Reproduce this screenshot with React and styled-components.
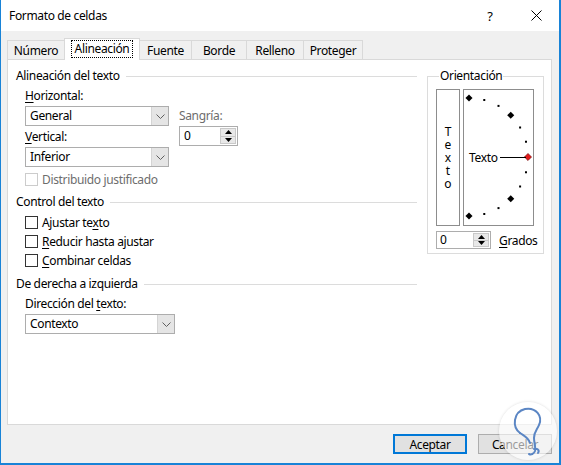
import React from 'react'
import styled, { createGlobalStyle } from 'styled-components'

const GlobalStyle = createGlobalStyle`
  html, body {
    margin: 0;
    padding: 0;
    background: #fff;
  }
  body {
    font-family: "Noto Sans", "Segoe UI", sans-serif;
    font-size: 12px;
    letter-spacing: -0.35px;
    color: #000;
  }
`

const Window = styled.div`
  position: relative;
  width: 561px;
  height: 465px;
  box-sizing: border-box;
  border-left: 1px solid #1883d7;
  border-right: 2px solid #1883d7;
  border-bottom: 2px solid #1883d7;
  background: #f0f0f0;
  display: flex;
  flex-direction: column;
  overflow: hidden;
`

const TitleBar = styled.div`
  height: 31px;
  flex: none;
  background: #fff;
  display: flex;
  align-items: center;
  padding-left: 8px;
`

const Title = styled.div`
  flex: 1;
`

const TitleButton = styled.div`
  width: 46px;
  height: 31px;
  display: flex;
  align-items: center;
  justify-content: center;
  font-size: 13px;
`

const Body = styled.div`
  flex: 1;
  display: flex;
  flex-direction: column;
  padding: 7px 7px 9px 6px;
`

const Tabs = styled.div`
  display: flex;
  align-items: flex-end;
  height: 21px;
`

const Tab = styled.div`
  position: relative;
  box-sizing: border-box;
  width: ${p => p.$w}px;
  height: ${p => (p.$active ? 22 : 19)}px;
  margin-right: -1px;
  margin-bottom: ${p => (p.$active ? -1 : 0)}px;
  z-index: ${p => (p.$active ? 2 : 1)};
  border: 1px solid #d9d9d9;
  border-bottom: none;
  background: ${p => (p.$active ? '#fff' : '#f0f0f0')};
  display: flex;
  justify-content: center;
  align-items: ${p => (p.$active ? 'flex-start' : 'center')};
  padding-top: ${p => (p.$active ? 2 : 0)}px;
`

const Focus = styled.span`
  outline: 1px dotted #000;
  padding: 0 3px;
  line-height: 16px;
`

const Panel = styled.div`
  height: 366px;
  box-sizing: border-box;
  background: #fff;
  border: 1px solid #d9d9d9;
  display: flex;
  padding: 8px 8px 0 8px;
`

const LeftCol = styled.div`
  width: 402px;
  display: flex;
  flex-direction: column;
`

const SectionHeader = styled.div`
  display: flex;
  align-items: center;
  height: 16px;
  line-height: 16px;
  margin-top: ${p => p.$mt || 0}px;
  &::after {
    content: '';
    flex: 1;
    height: 1px;
    margin-left: 6px;
    background: #dcdcdc;
  }
`

const Indent = styled.div`
  padding-left: 9px;
  margin-top: ${p => p.$mt || 0}px;
  display: ${p => (p.$row ? 'flex' : 'block')};
`

const Stack = styled.div`
  display: flex;
  flex-direction: column;
  padding-top: ${p => p.$pt || 0}px;
  margin-left: ${p => p.$ml || 0}px;
`

const Label = styled.div`
  height: 16px;
  line-height: 16px;
  white-space: nowrap;
  color: ${p => (p.$dim ? '#6d6d6d' : '#000')};
  margin-top: ${p => p.$mt || 0}px;
`

const Select = styled.div`
  box-sizing: border-box;
  width: ${p => p.$w}px;
  height: 20px;
  margin-top: 2px;
  border: 1px solid #adadad;
  background: #fff;
  display: flex;
`

const FieldValue = styled.div`
  flex: 1;
  padding-left: ${p => p.$pl || 4}px;
  line-height: ${p => p.$lh || 18}px;
`

const DropButton = styled.div`
  width: 16px;
  background: #e5e5e5;
  border-left: 1px solid #d4d4d4;
  display: flex;
  align-items: center;
  justify-content: center;
`

const Spinner = styled.div`
  box-sizing: border-box;
  width: ${p => p.$w}px;
  height: ${p => p.$h}px;
  margin-top: ${p => p.$mt || 0}px;
  border: 1px solid #adadad;
  background: #fff;
  display: flex;
`

const SpinButtons = styled.div`
  width: 14px;
  margin: 1px;
  display: flex;
  flex-direction: column;
  border: 1px solid #c9c9c9;
  background: #e8e8e8;
`

const SpinHalf = styled.div`
  flex: 1;
  display: flex;
  align-items: center;
  justify-content: center;
  & + & {
    border-top: 1px solid #c9c9c9;
  }
`

const CheckRow = styled.label`
  display: flex;
  align-items: center;
  height: ${p => p.$h || 19}px;
  gap: 4px;
  color: ${p => (p.$disabled ? '#6d6d6d' : '#000')};
`

const Box = styled.span`
  width: 13px;
  height: 13px;
  box-sizing: border-box;
  border: 1px solid ${p => (p.$disabled ? '#cccccc' : '#333333')};
  background: #fff;
`

const RightCol = styled.div`
  width: 116px;
  margin-left: 10px;
`

const Group = styled.fieldset`
  box-sizing: border-box;
  width: 116px;
  margin: 0;
  padding: 5px 6px 4px 8px;
  border: 1px solid #dcdcdc;
  legend {
    padding: 0 1px;
    margin-left: 3px;
    line-height: 16px;
  }
`

const DialRow = styled.div`
  display: flex;
  gap: 3px;
`

const VerticalText = styled.div`
  box-sizing: border-box;
  width: 24px;
  height: 137px;
  border: 1px solid #8d8d8d;
  display: flex;
  align-items: center;
  justify-content: center;
`

const Stacked = styled.span`
  width: 8px;
  text-align: center;
  line-height: 13px;
  letter-spacing: 0;
  word-break: break-all;
`

const Dial = styled.div`
  box-sizing: border-box;
  width: 71px;
  height: 137px;
  border: 1px solid #8d8d8d;
  svg {
    display: block;
  }
`

const DegreeRow = styled.div`
  display: flex;
  align-items: center;
  margin-top: 5px;
  gap: 8px;
`

const Footer = styled.div`
  display: flex;
  justify-content: flex-end;
  gap: 11px;
  margin-top: 9px;
`

const Button = styled.div`
  box-sizing: border-box;
  width: 74px;
  height: 20px;
  background: #e1e1e1;
  border: ${p => (p.$primary ? '2px solid #0078d7' : '1px solid #adadad')};
  display: flex;
  align-items: center;
  justify-content: center;
`

const Watermark = styled.div`
  position: absolute;
  left: 498px;
  top: 402px;
  width: 58px;
  height: 58px;
  border-radius: 50%;
  background: rgba(255, 255, 255, 0.6);
  box-shadow: 0 0 3px rgba(0, 0, 0, 0.15);
  svg {
    display: block;
  }
`

const U = styled.span`
  text-decoration: underline;
  text-underline-offset: 2px;
`

const Chevron = () => (
  <svg width="9" height="5" viewBox="0 0 9 5">
    <path d="M0.5 0.5 L4.5 4.5 L8.5 0.5" fill="none" stroke="#606060" strokeWidth="1" />
  </svg>
)

const Arrow = ({ up }) => (
  <svg width="7" height="4" viewBox="0 0 7 4">
    <path d={up ? 'M0 4 L3.5 0 L7 4 Z' : 'M0 0 L7 0 L3.5 4 Z'} fill="#000" />
  </svg>
)

const SpinBox = ({ w, h, mt, pl }) => (
  <Spinner $w={w} $h={h} $mt={mt}>
    <FieldValue $pl={pl} $lh={h - 2}>0</FieldValue>
    <SpinButtons>
      <SpinHalf><Arrow up /></SpinHalf>
      <SpinHalf><Arrow /></SpinHalf>
    </SpinButtons>
  </Spinner>
)

const Combo = ({ w, value }) => (
  <Select $w={w}>
    <FieldValue>{value}</FieldValue>
    <DropButton><Chevron /></DropButton>
  </Select>
)

const dialPoints = () => {
  const cx = 5
  const cy = 67
  const r = 59
  const items = []
  for (let a = 90; a >= -90; a -= 15) {
    const rad = (a * Math.PI) / 180
    const x = cx + r * Math.cos(rad)
    const y = cy - r * Math.sin(rad)
    if (a === 0) {
      items.push(<rect key={a} x={x - 2.5} y={y - 2.5} width="5" height="5" fill="#e31b1b" stroke="#600" strokeWidth="0.6" transform={`rotate(45 ${x} ${y})`} />)
    } else if (a % 45 === 0) {
      items.push(<rect key={a} x={x - 2.5} y={y - 2.5} width="5" height="5" fill="#000" transform={`rotate(45 ${x} ${y})`} />)
    } else {
      items.push(<rect key={a} x={x - 1} y={y - 1} width="2" height="2" fill="#000" />)
    }
  }
  return items
}

export default function App() {
  return (
    <>
      <GlobalStyle />
      <Window>
        <TitleBar>
          <Title>Formato de celdas</Title>
          <TitleButton>?</TitleButton>
          <TitleButton>
            <svg width="11" height="11" viewBox="0 0 11 11">
              <path d="M0.5 0.5 L10.5 10.5 M10.5 0.5 L0.5 10.5" stroke="#000" strokeWidth="1" />
            </svg>
          </TitleButton>
        </TitleBar>
        <Body>
          <Tabs>
            <Tab $w={58}>Número</Tab>
            <Tab $w={76} $active><Focus>Alineación</Focus></Tab>
            <Tab $w={53}>Fuente</Tab>
            <Tab $w={56}>Borde</Tab>
            <Tab $w={58}>Relleno</Tab>
            <Tab $w={60}>Proteger</Tab>
          </Tabs>
          <Panel>
            <LeftCol>
              <SectionHeader>Alineación del texto</SectionHeader>
              <Indent $row $mt={4}>
                <Stack>
                  <Label><U>H</U>orizontal:</Label>
                  <Combo w={144} value="General" />
                  <Label $mt={3}><U>V</U>ertical:</Label>
                  <Combo w={144} value="Inferior" />
                </Stack>
                <Stack $pt={20} $ml={10}>
                  <Label $dim>Sangría:</Label>
                  <SpinBox w={59} h={20} mt={2} pl={4} />
                </Stack>
              </Indent>
              <Indent $mt={4}>
                <CheckRow $h={16} $disabled><Box $disabled /><span>Distribuido justificado</span></CheckRow>
              </Indent>
              <SectionHeader $mt={7}>Control del texto</SectionHeader>
              <Indent $mt={3}>
                <CheckRow><Box /><span>Ajustar te<U>x</U>to</span></CheckRow>
                <CheckRow><Box /><span><U>R</U>educir hasta ajustar</span></CheckRow>
                <CheckRow><Box /><span><U>C</U>ombinar celdas</span></CheckRow>
              </Indent>
              <SectionHeader $mt={6}>De derecha a izquierda</SectionHeader>
              <Indent $mt={4}>
                <Label>Dirección del <U>t</U>exto:</Label>
                <Combo w={150} value="Contexto" />
              </Indent>
            </LeftCol>
            <RightCol>
              <Group>
                <legend>Orientación</legend>
                <DialRow>
                  <VerticalText>
                    <Stacked>Texto</Stacked>
                  </VerticalText>
                  <Dial>
                    <svg width="69" height="135" viewBox="0 0 69 135">
                      {dialPoints()}
                      <line x1="36" y1="67.5" x2="62" y2="67.5" stroke="#000" strokeWidth="1" />
                      <text x="5" y="72" fontSize="12" letterSpacing="-0.35" fontFamily='"Noto Sans", sans-serif' fill="#000">Texto</text>
                    </svg>
                  </Dial>
                </DialRow>
                <DegreeRow>
                  <SpinBox w={55} h={18} pl={3} />
                  <span><U>G</U>rados</span>
                </DegreeRow>
              </Group>
            </RightCol>
          </Panel>
          <Footer>
            <Button $primary>Aceptar</Button>
            <Button>Cancelar</Button>
          </Footer>
        </Body>
        <Watermark>
          <svg width="58" height="58" viewBox="0 0 58 58">
            <path
              d="M21 31 C13 25 14 10 26 7 C37 5 44 14 40 23 C38 28 35 30 35 36 C35 41 37 45 36 49 C35 52 32 53 30 52 M35 47 C38 46 41 48 39 51"
              fill="none"
              stroke="#5b86c4"
              strokeWidth="2"
              strokeLinecap="round"
            />
            <path d="M21 31 C25 34 29 35 31 41" fill="none" stroke="#5b86c4" strokeWidth="2" strokeLinecap="round" />
          </svg>
        </Watermark>
      </Window>
    </>
  )
}
